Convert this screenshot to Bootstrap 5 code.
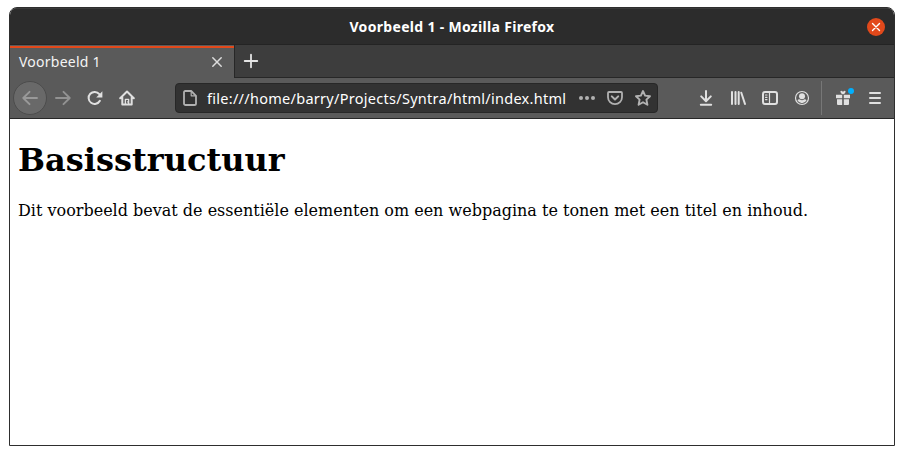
<!DOCTYPE html>
<html lang="nl">
<head>
<meta charset="utf-8">
<title>Voorbeeld 1</title>
<link href="https://cdn.jsdelivr.net/npm/bootstrap@5.3.0/dist/css/bootstrap.min.css" rel="stylesheet">
<style>
body{background:#fff;overflow:hidden;font-family:"Noto Sans","Open Sans",sans-serif}
.window{width:886px;height:439px;margin:7px 0 0 9px;border:1px solid #2e2e2e;border-radius:8px 8px 0 0;background:#fff}
.titlebar{height:37px;background:#2c2c2c;border-top:1px solid #3a3a3a;border-bottom:1px solid #242424;color:#fff;font-size:14px;font-weight:700;letter-spacing:.31px}
.win-title{position:absolute;left:0;right:0;text-align:center}
.win-close{width:18px;height:18px;background:#e2491b;margin-right:9px}
.tabstrip{height:33px;background:#3d3d3d}
.tab-active{width:225px;background:#5a5a5a;border-right:1px solid #272727;padding:1px 11px 0 9px;color:#f4f4f4;font-size:14px;letter-spacing:.25px}
.tab-active::before{content:"";position:absolute;left:0;right:0;top:1px;height:2px;background:#e2491b}
.tab-label{padding-bottom:2px}
.strip-rest{border-bottom:1px solid #272727;padding-left:8px}
.toolbar{height:41px;background:#5a5a5a;border-bottom:1px solid #272727;color:#e0e0e0}
.back-btn{width:34px;height:34px;margin:0 8px 0 3px;background:#696969;border:1px solid #4c4c4c;color:#999}
.address{width:483px;height:30px;margin:0 40px;padding:0 6px 0 7px;background:#323232;border:1px solid #272727;color:#b1b1b1}
.url{color:#fff;font-size:14.5px;letter-spacing:.28px;width:360px;margin:0 12px 0 8px;padding-top:1px}
.divider{width:1px;height:34px;background:#777;margin:0 13px 0 11px}
.notice{position:absolute;width:6px;height:6px;background:#00b0ff;left:13px;top:-2px}
.page{font-family:"DejaVu Serif",serif;color:#000;padding:22px 8px 0;font-size:16px}
.page h1{font-size:32px;font-weight:700;line-height:38px;margin:0 0 20px}
svg{display:block;flex:none;fill:none;stroke:currentColor;stroke-width:2;stroke-linecap:round;stroke-linejoin:round}
svg .solid{fill:currentColor;stroke:none}
</style>
</head>
<body>
<div class="window overflow-hidden">
  <header class="titlebar position-relative d-flex align-items-center justify-content-end">
    <div class="win-title">Voorbeeld 1 - Mozilla Firefox</div>
    <div class="win-close rounded-circle position-relative d-flex align-items-center justify-content-center">
      <svg width="10" height="10" viewBox="0 0 10 10"><path d="M1.5 1.5 8.5 8.5M8.5 1.5 1.5 8.5" stroke="#fff" stroke-width="1.4"/></svg>
    </div>
  </header>
  <div class="tabstrip d-flex">
    <div class="tab-active position-relative d-flex align-items-center justify-content-between">
      <span class="tab-label">Voorbeeld 1</span>
      <svg width="12" height="12" viewBox="0 0 12 12"><path d="M1.8 1.8 10.2 10.2M10.2 1.8 1.8 10.2" stroke="#dcdcdc" stroke-width="1.5"/></svg>
    </div>
    <div class="strip-rest flex-grow-1 d-flex align-items-center">
      <svg width="16" height="16" viewBox="0 0 16 16"><path d="M8 1.7V14.3M1.7 8H14.3" stroke="#e5e5e5" stroke-width="1.8"/></svg>
    </div>
  </div>
  <nav class="toolbar d-flex align-items-center">
    <div class="back-btn rounded-circle d-flex align-items-center justify-content-center">
      <svg width="16" height="16" viewBox="0 0 16 16"><path d="M15 8H1.5M7.5 1.8 1.3 8 7.5 14.2" stroke-width="1.9"/></svg>
    </div>
    <div class="d-flex gap-3">
      <svg width="16" height="16" viewBox="0 0 16 16"><path d="M1 8H14.5M8.5 1.8 14.7 8 8.5 14.2" stroke="#929292" stroke-width="1.9"/></svg>
      <svg width="16" height="16" viewBox="0 0 16 16"><path d="M12.9 10.8A6 6 0 1 1 12.3 4.2"/><path class="solid" d="M15.4 1.2V7.4H9.2Z"/></svg>
      <svg width="16" height="16" viewBox="0 0 16 16"><path d="M1.2 8.3 8 1.5 14.8 8.3M3.3 7.5V14.6H12.7V7.5"/><path d="M6.4 14V9.4H9.6V14" stroke-width="1.4"/><circle class="solid" cx="8.5" cy="11.9" r=".6"/></svg>
    </div>
    <div class="address rounded-1 d-flex align-items-center">
      <svg width="16" height="16" viewBox="0 0 16 16"><path d="M2.2 1H8.2L13 5.8V13.4A1.6 1.6 0 0 1 11.4 15H2.6A1.6 1.6 0 0 1 1 13.4V2.2A1.2 1.2 0 0 1 2.2 1Z" stroke-width="1.8"/><path d="M8.2 1.5V5.8H12.6" stroke-width="1.2"/></svg>
      <span class="url text-nowrap">file:///home/barry/Projects/Syntra/html/index.html</span>
      <svg width="16" height="16" viewBox="0 0 16 16"><g class="solid"><circle cx="2" cy="8" r="2"/><circle cx="8" cy="8" r="2"/><circle cx="14" cy="8" r="2"/></g></svg>
      <svg class="ms-2 me-2" width="24" height="16" viewBox="-4 0 24 16"><path d="M2 2H14A1 1 0 0 1 15 3V7.2A7 7 0 0 1 1 7.2V3A1 1 0 0 1 2 2Z" stroke-width="1.8"/><path d="M4.8 6.4 8 9.5 11.2 6.4" stroke-width="2"/></svg>
      <svg width="16" height="16" viewBox="0 0 16 16"><path d="M8 1 10.1 5.6 15 6.2 11.4 9.6 12.4 14.8 8 12.2 3.6 14.8 4.6 9.6 1 6.2 5.9 5.6Z" stroke-width="1.9"/></svg>
    </div>
    <div class="d-flex gap-3">
      <svg width="16" height="16" viewBox="0 0 16 16"><path d="M8 1V11M3.2 6.4 8 11.2 12.8 6.4M2.8 14.8H13.2"/></svg>
      <svg width="16" height="16" viewBox="0 0 16 16"><path d="M2 2V14M5.5 2V14M8.7 2V14M11.3 2.7 15 14"/></svg>
      <svg width="16" height="16" viewBox="0 0 16 16"><rect x="1" y="2" width="14" height="12" rx="2"/><path d="M7.5 2V14M3.5 5H5M3.5 7.3H5M3.5 9.6H5" stroke-width="1.2"/></svg>
      <svg width="16" height="16" viewBox="0 0 16 16"><circle cx="8" cy="8" r="6.5" stroke-width="1.2"/><circle class="solid" cx="8" cy="6.2" r="3"/><path class="solid" d="M3.4 10.3Q4.5 9 6 9.5Q8 10.8 10 9.5Q11.5 9 12.6 10.3Q11 13.2 8 13.2T3.4 10.3Z"/></svg>
    </div>
    <div class="divider"></div>
    <div class="d-flex gap-3">
      <div class="position-relative">
        <svg width="16" height="16" viewBox="0 0 16 16"><path class="solid" d="M1 4.8H7.2V8.3H1ZM8.8 4.8H15V8.3H8.8ZM2 9.3H7.2V15H3Q2 15 2 14ZM8.8 9.3H14V14Q14 15 13 15H8.8Z"/><path class="solid" d="M8 4.5Q5.2 3.6 5.4 1.5Q5.8 0 8 1.7Q10.2 0 10.6 1.5Q10.8 3.6 8 4.5Z"/></svg>
        <span class="notice rounded-circle"></span>
      </div>
      <svg width="16" height="16" viewBox="0 0 16 16"><path d="M3 3H13M3 8H13M3 13H13"/></svg>
    </div>
  </nav>
  <main class="page">
    <h1>Basisstructuur</h1>
    <p>Dit voorbeeld bevat de essentiële elementen om een webpagina te tonen met een titel en inhoud.</p>
  </main>
</div>
<script src="https://cdn.jsdelivr.net/npm/bootstrap@5.3.0/dist/js/bootstrap.bundle.min.js"></script>
</body>
</html>
